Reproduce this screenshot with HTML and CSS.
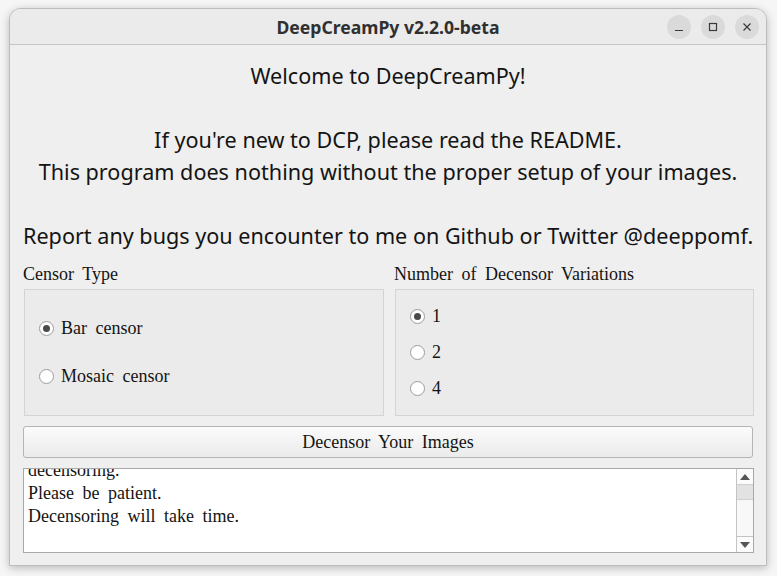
FILE: index.html
```html
<!DOCTYPE html>
<html>
<head>
<meta charset="utf-8">
<link rel="stylesheet" href="styles.css">
</head>
<body>
<div class="window">
  <div class="titlebar">
    <div class="title">DeepCreamPy v2.2.0-beta</div>
    <div class="controls">
      <span class="ctl"><svg width="10" height="10" viewBox="0 0 10 10"><path d="M1 8.5H9" stroke="#3a3a3a" stroke-width="1.2"/></svg></span>
      <span class="ctl"><svg width="10" height="10" viewBox="0 0 10 10"><rect x="1.5" y="1.5" width="7" height="7" fill="none" stroke="#3a3a3a" stroke-width="1.2"/></svg></span>
      <span class="ctl"><svg width="10" height="10" viewBox="0 0 10 10"><path d="M1.5 1.5L8.5 8.5M8.5 1.5L1.5 8.5" stroke="#3a3a3a" stroke-width="1.2"/></svg></span>
    </div>
  </div>
  <div class="content">
    <div class="intro">
      <p>Welcome to DeepCreamPy!</p>
      <p>&nbsp;</p>
      <p>If you're new to DCP, please read the README.</p>
      <p>This program does nothing without the proper setup of your images.</p>
      <p>&nbsp;</p>
      <p>Report any bugs you encounter to me on Github or Twitter @deeppomf.</p>
    </div>
    <div class="groups">
      <div class="group">
        <div class="glabel">Censor Type</div>
        <div class="gbox gbox-left">
          <label class="radio"><span class="dot checked"></span>Bar censor</label>
          <label class="radio"><span class="dot"></span>Mosaic censor</label>
        </div>
      </div>
      <div class="group">
        <div class="glabel">Number of Decensor Variations</div>
        <div class="gbox gbox-right">
          <label class="radio"><span class="dot checked"></span>1</label>
          <label class="radio"><span class="dot"></span>2</label>
          <label class="radio"><span class="dot"></span>4</label>
        </div>
      </div>
    </div>
    <div class="button">Decensor Your Images</div>
    <div class="log">
      <div class="logtext">
        <div class="line clipped">decensoring.</div>
        <div class="line">Please be patient.</div>
        <div class="line">Decensoring will take time.</div>
      </div>
      <div class="scrollbar">
        <div class="arrow"><svg width="10" height="6" viewBox="0 0 10 6"><path d="M0 6L5 0L10 6Z" fill="#555"/></svg></div>
        <div class="track"><div class="handle"></div></div>
        <div class="arrow arrow-down"><svg width="10" height="6" viewBox="0 0 10 6"><path d="M0 0L5 6L10 0Z" fill="#555"/></svg></div>
      </div>
    </div>
  </div>
</div>
</body>
</html>
```
FILE: styles.css
```css
html, body {
  margin: 0;
  padding: 0;
}
body {
  background: #f6f6f6;
  padding: 8px 10px 10px 9px;
  width: 777px;
  height: 576px;
  box-sizing: border-box;
  overflow: hidden;
}
.window {
  width: 758px;
  height: 558px;
  box-sizing: border-box;
  border: 1px solid #bcbcbc;
  border-radius: 12px 12px 0 0;
  background: #efefef;
  box-shadow: 0 2px 8px rgba(0,0,0,0.25);
  display: flex;
  flex-direction: column;
  overflow: hidden;
}
.titlebar {
  height: 36px;
  flex: none;
  box-sizing: border-box;
  border-bottom: 1px solid #c6c6c6;
  background: #ebebeb;
  display: flex;
  align-items: center;
  justify-content: center;
  position: relative;
}
.title {
  font-family: "Noto Sans", "Open Sans", sans-serif;
  font-weight: bold;
  font-size: 17.6px;
  color: #303030;
}
.controls {
  position: absolute;
  right: 7px;
  top: 6px;
  display: flex;
  gap: 10px;
}
.ctl {
  width: 24px;
  height: 24px;
  border-radius: 50%;
  background: #dadada;
  display: flex;
  align-items: center;
  justify-content: center;
}
.content {
  flex: 1;
  display: flex;
  flex-direction: column;
  padding: 15px 13px 13px 13px;
}
.intro {
  font-family: "Noto Sans", "Open Sans", sans-serif;
  font-size: 21.6px;
  color: #141414;
  text-align: center;
}
.intro p {
  margin: 0;
  height: 32px;
  line-height: 32px;
  white-space: nowrap;
}
.groups {
  display: grid;
  grid-template-columns: 361px 360px;
  gap: 10px;
  margin-top: 12px;
}
.glabel {
  font-family: "Liberation Serif", "DejaVu Serif", serif;
  font-size: 18px;
  word-spacing: 4px;
  color: #141414;
  height: 20px;
  line-height: 20px;
  margin-bottom: 5px;
  white-space: nowrap;
}
.gbox {
  height: 127px;
  box-sizing: border-box;
  border: 1px solid #d4d4d4;
  background: #ebebeb;
  margin-left: 1px;
  display: flex;
  flex-direction: column;
}
.gbox-left {
  padding: 28px 0 0 14px;
  gap: 28px;
}
.gbox-right {
  padding: 16px 0 0 14px;
  gap: 16px;
}
.radio {
  display: flex;
  align-items: center;
  height: 20px;
  font-family: "Liberation Serif", "DejaVu Serif", serif;
  font-size: 18px;
  word-spacing: 4px;
  color: #141414;
}
.dot {
  width: 15px;
  height: 15px;
  box-sizing: border-box;
  border: 1px solid #9c9c9c;
  border-radius: 50%;
  background: #fff;
  margin-right: 7px;
  display: flex;
  align-items: center;
  justify-content: center;
  flex: none;
}
.dot.checked::after {
  content: "";
  width: 7px;
  height: 7px;
  border-radius: 50%;
  background: #4a4a4a;
}
.button {
  margin-top: 10px;
  height: 32px;
  box-sizing: border-box;
  border: 1px solid #b4b4b4;
  border-radius: 3px;
  background: linear-gradient(#fbfbfb, #ebebeb);
  display: flex;
  align-items: center;
  justify-content: center;
  font-family: "Liberation Serif", "DejaVu Serif", serif;
  font-size: 18px;
  word-spacing: 4px;
  color: #141414;
}
.log {
  margin-top: 10px;
  height: 85px;
  width: 731px;
  box-sizing: border-box;
  border: 1px solid #a8a8a8;
  background: #fff;
  display: flex;
}
.logtext {
  flex: 1;
  overflow: hidden;
  padding-left: 4px;
  font-family: "Liberation Serif", "DejaVu Serif", serif;
  font-size: 18px;
  word-spacing: 4px;
  color: #141414;
}
.line {
  height: 23px;
  line-height: 23px;
}
.clipped {
  margin-top: -10px;
}
.scrollbar {
  width: 16px;
  border-left: 1px solid #c4c4c4;
  display: flex;
  flex-direction: column;
  background: #fbfbfb;
}
.arrow {
  height: 15px;
  display: flex;
  align-items: center;
  justify-content: center;
  flex: none;
}
.arrow-down {
  border-top: 1px solid #c4c4c4;
}
.track {
  flex: 1;
  background: #f8f8f8;
}
.handle {
  height: 14px;
  background: #e2e2e2;
  border-top: 1px solid #cfcfcf;
  border-bottom: 1px solid #cfcfcf;
}
```
